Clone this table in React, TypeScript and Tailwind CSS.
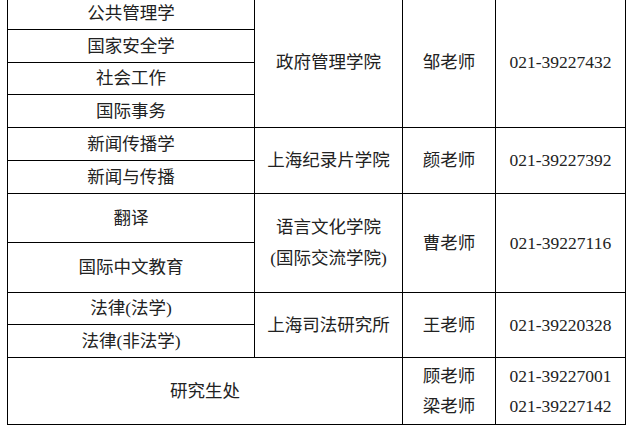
type Row = {
  major: string;
  h: string;
  school?: { text: string[]; span: number };
  teacher?: { text: string; span: number };
  phone?: { text: string; span: number };
};

const rows: Row[] = [
  {
    major: "公共管理学",
    h: "h-[33px]",
    school: { text: ["政府管理学院"], span: 4 },
    teacher: { text: "邹老师", span: 4 },
    phone: { text: "021-39227432", span: 4 },
  },
  { major: "国家安全学", h: "h-[33px]" },
  { major: "社会工作", h: "h-[32px]" },
  { major: "国际事务", h: "h-[33px]" },
  {
    major: "新闻传播学",
    h: "h-[33px]",
    school: { text: ["上海纪录片学院"], span: 2 },
    teacher: { text: "颜老师", span: 2 },
    phone: { text: "021-39227392", span: 2 },
  },
  { major: "新闻与传播", h: "h-[33px]" },
  {
    major: "翻译",
    h: "h-[49px]",
    school: { text: ["语言文化学院", "(国际交流学院)"], span: 2 },
    teacher: { text: "曹老师", span: 2 },
    phone: { text: "021-39227116", span: 2 },
  },
  { major: "国际中文教育", h: "h-[50px]" },
  {
    major: "法律(法学)",
    h: "h-[32px]",
    school: { text: ["上海司法研究所"], span: 2 },
    teacher: { text: "王老师", span: 2 },
    phone: { text: "021-39220328", span: 2 },
  },
  { major: "法律(非法学)", h: "h-[33px]" },
];

const cell = "border border-black text-center align-middle p-0";

export default function App() {
  return (
    <div className="w-[631px] h-[432px] overflow-hidden bg-white font-['Liberation_Serif','Noto_Sans_CJK_SC',serif]">
      <table className="table-fixed border-collapse ml-[7px] -mt-[4px] w-[619px] text-[17.5px] text-[#222] font-['Liberation_Serif','Noto_Sans_CJK_SC',serif]">
        <colgroup>
          <col className="w-[247px]" />
          <col className="w-[148px]" />
          <col className="w-[93px]" />
          <col className="w-[130px]" />
        </colgroup>
        <tbody>
          {rows.map((row) => (
            <tr key={row.major} className={row.h}>
              <td className={cell}>{row.major}</td>
              {row.school && (
                <td className={cell} rowSpan={row.school.span}>
                  {row.school.text.map((t) => (
                    <div key={t} className="leading-[31px]">
                      {t}
                    </div>
                  ))}
                </td>
              )}
              {row.teacher && (
                <td className={cell} rowSpan={row.teacher.span}>
                  {row.teacher.text}
                </td>
              )}
              {row.phone && (
                <td className={cell} rowSpan={row.phone.span}>
                  {row.phone.text}
                </td>
              )}
            </tr>
          ))}
          <tr className="h-[67px]">
            <td className={cell} colSpan={2}>
              研究生处
            </td>
            <td className={cell}>
              <div className="leading-[30px]">顾老师</div>
              <div className="leading-[30px]">梁老师</div>
            </td>
            <td className={cell}>
              <div className="leading-[30px]">021-39227001</div>
              <div className="leading-[30px]">021-39227142</div>
            </td>
          </tr>
        </tbody>
      </table>
    </div>
  );
}
